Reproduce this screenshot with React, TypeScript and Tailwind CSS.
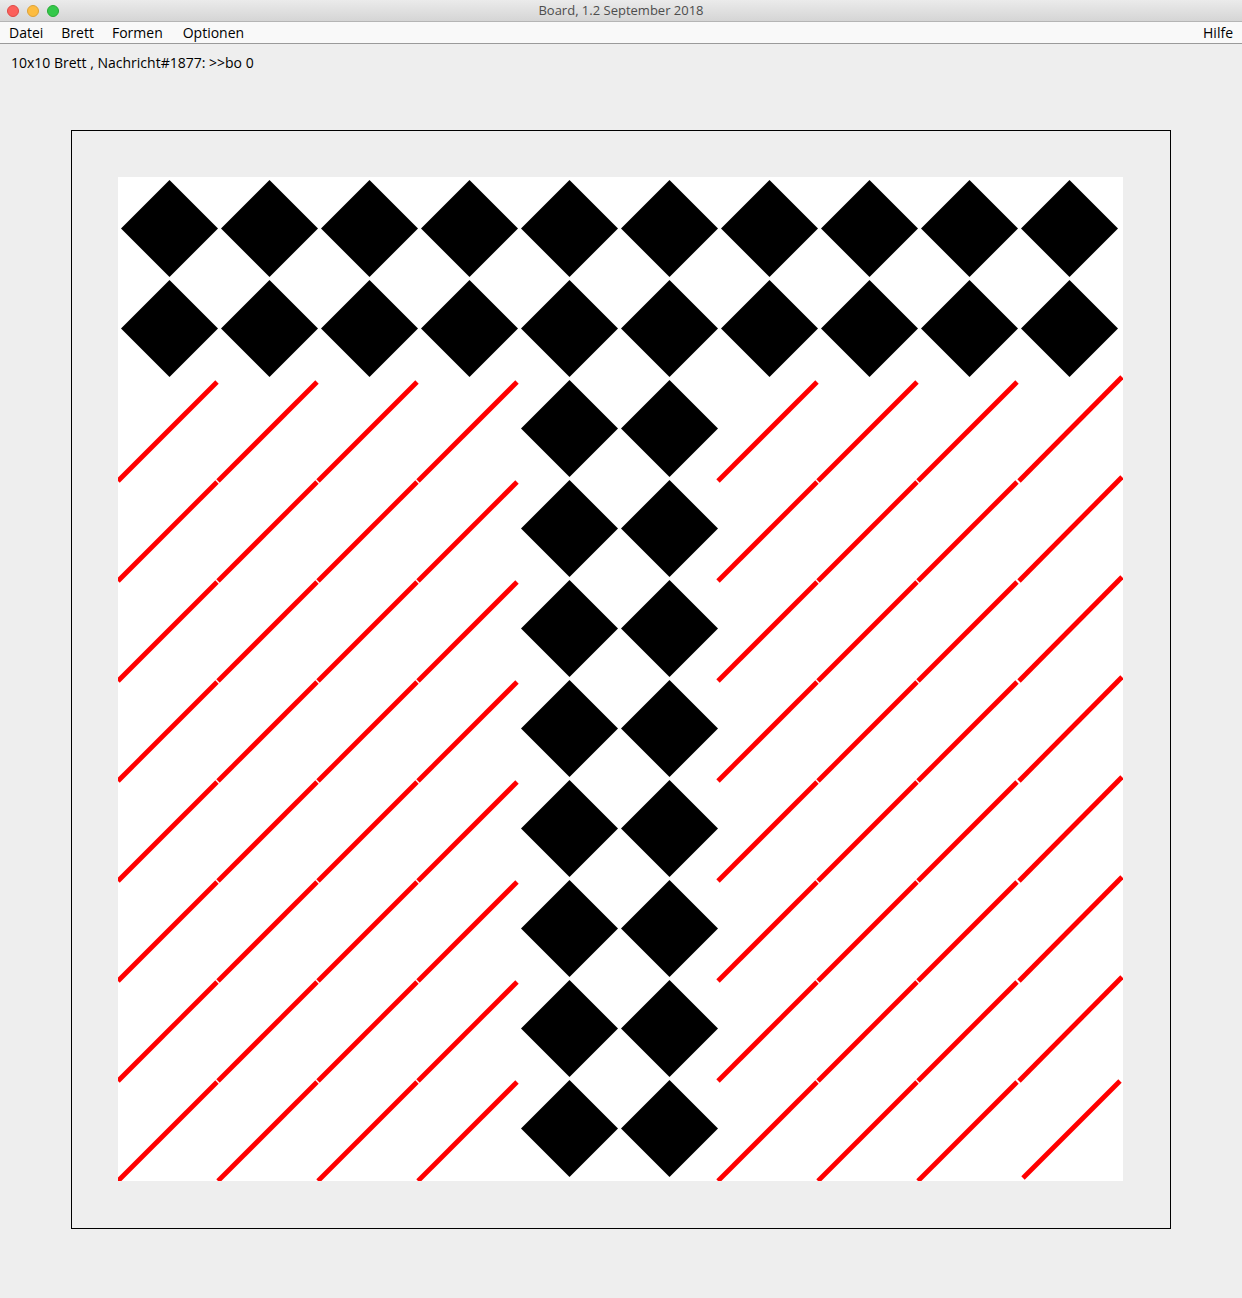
import React from "react";

const cells: React.ReactNode[] = [];
for (let r = 0; r < 10; r++) {
  for (let c = 0; c < 10; c++) {
    const isDiamond = r < 2 || c === 4 || c === 5;
    if (isDiamond) {
      const cx = 51.5 + 100 * c;
      const cy = 51.5 + 100 * r;
      const h = 48.5;
      cells.push(
        <polygon
          key={`d${r}-${c}`}
          points={`${cx},${cy - h} ${cx + h},${cy} ${cx},${cy + h} ${cx - h},${cy}`}
          fill="#000"
        />
      );
    } else {
      const x1 = 100 * c;
      const y1 = 304 + 100 * (r - 2);
      let x2 = x1 + 99;
      let y2 = y1 - 99;
      let sx = x1;
      let sy = y1;
      if (c === 9) {
        sx = x1 + 1;
        x2 = 1004;
        y2 = y1 - 104;
        if (r === 9) {
          sx = 905;
          sy = 1001;
          x2 = 1002;
          y2 = 904;
        }
      }
      cells.push(
        <line
          key={`l${r}-${c}`}
          x1={sx}
          y1={sy}
          x2={x2}
          y2={y2}
          stroke="#ff0000"
          strokeWidth={4.8}
        />
      );
    }
  }
}

export default function App() {
  return (
    <div
      className="w-[1242px] h-[1298px] bg-[#eeeeee] flex flex-col overflow-hidden"
      style={{ fontFamily: '"Open Sans", "Liberation Sans", Arial, sans-serif' }}
    >
      {/* title bar */}
      <div className="h-[22px] flex items-center relative bg-gradient-to-b from-[#ebebeb] to-[#d5d5d5] border-b border-[#b5b5b5]">
        <div className="flex gap-[8px] pl-[7px]">
          <span className="w-[12px] h-[12px] rounded-full bg-[#fc605b] border border-[#de4a45]" />
          <span className="w-[12px] h-[12px] rounded-full bg-[#fdbc40] border border-[#dea236]" />
          <span className="w-[12px] h-[12px] rounded-full bg-[#34c84a] border border-[#27aa35]" />
        </div>
        <div className="absolute inset-0 flex items-center justify-center text-[13px] text-[#4d4d4d]">
          Board, 1.2 September 2018
        </div>
      </div>
      {/* menu bar */}
      <div className="h-[22px] flex items-center bg-[#f9f9f9] border-b border-[#9a9a9a] text-[14px] text-black">
        <span className="ml-[9px]">Datei</span>
        <span className="ml-[18px]">Brett</span>
        <span className="ml-[18px]">Formen</span>
        <span className="ml-[20px]">Optionen</span>
        <span className="ml-auto mr-[9px]">Hilfe</span>
      </div>
      {/* status label */}
      <div className="pl-[11px] pt-[10px] text-[14px] text-black leading-[18px]">
        10x10 Brett , Nachricht#1877: &gt;&gt;bo 0
      </div>
      {/* panel */}
      <div className="ml-[71px] mt-[58px] w-[1100px] h-[1099px] border border-black p-[46px]">
        <div className="w-[1005px] h-[1004px] bg-white">
          <svg width={1005} height={1004} viewBox="0 0 1005 1004" className="block">
            {cells}
          </svg>
        </div>
      </div>
    </div>
  );
}
